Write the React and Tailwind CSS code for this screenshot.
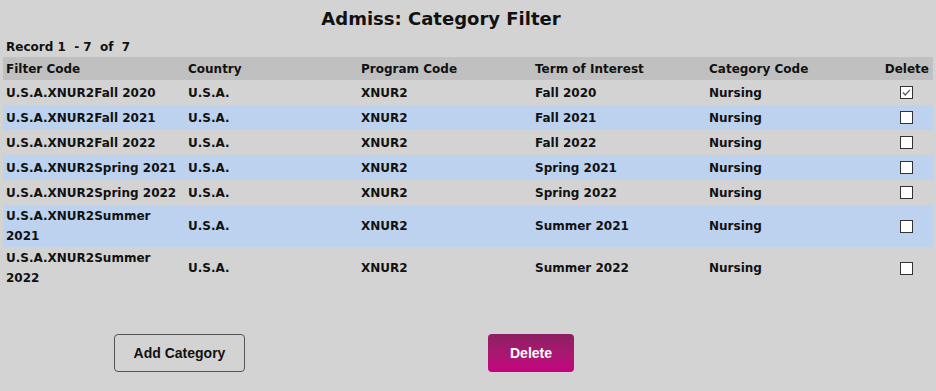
import React from "react";

const rows = [
  ["U.S.A.XNUR2Fall 2020", "Fall 2020", true],
  ["U.S.A.XNUR2Fall 2021", "Fall 2021", false],
  ["U.S.A.XNUR2Fall 2022", "Fall 2022", false],
  ["U.S.A.XNUR2Spring 2021", "Spring 2021", false],
  ["U.S.A.XNUR2Spring 2022", "Spring 2022", false],
  ["U.S.A.XNUR2Summer 2021", "Summer 2021", false],
  ["U.S.A.XNUR2Summer 2022", "Summer 2022", false],
];

function Box({ checked }) {
  return (
    <div className="w-[13px] h-[13px] border border-[#333] bg-white flex items-center justify-center">
      {checked && (
        <svg width="11" height="11" viewBox="0 0 11 11">
          <path d="M2 5.5 L4.3 8 L9 2.8" stroke="#555" strokeWidth="1.2" fill="none" />
        </svg>
      )}
    </div>
  );
}

export default function App() {
  return (
    <div className="w-[936px] h-[391px] bg-[#d3d3d3] text-[#111] font-['DejaVu_Sans',sans-serif] font-bold flex flex-col">
      <h1 className="text-center text-[18px] leading-[24px] pt-[7px] h-[36px] pr-[54px]">Admiss: Category Filter</h1>
      <div className="text-[12px] leading-[18px] pl-[6px] h-[21px] pt-[2px]">Record 1&nbsp; - 7&nbsp; of&nbsp; 7</div>
      <div className="mx-[3px] w-[930px] text-[12px]">
        <div className="grid grid-cols-[182px_173px_174px_174px_174px_53px] bg-[#c0c0c0] h-[23px] items-center font-bold">
          <div className="pl-[3px]">Filter Code</div>
          <div className="pl-[3px]">Country</div>
          <div className="pl-[3px]">Program Code</div>
          <div className="pl-[3px]">Term of Interest</div>
          <div className="pl-[3px]">Category Code</div>
          <div className="text-right pr-[4px]">Delete</div>
        </div>
        {rows.map((r, i) => (
          <div
            key={i}
            className={`grid grid-cols-[182px_173px_174px_174px_174px_53px] items-center min-h-[25px] ${i % 2 === 1 ? "bg-[#bcd2ee]" : ""}`}
          >
            <div className="pl-[3px] pr-[6px] leading-[20px] py-[1px]">{r[0]}</div>
            <div className="pl-[3px]">U.S.A.</div>
            <div className="pl-[3px]">XNUR2</div>
            <div className="pl-[3px]">{r[1]}</div>
            <div className="pl-[3px]">Nursing</div>
            <div className="flex justify-center">
              <Box checked={r[2]} />
            </div>
          </div>
        ))}
      </div>
      <div className="flex-1">
        <div className="flex pt-[45px]">
          <button className="ml-[114px] w-[131px] h-[38px] rounded-[4px] border border-[#555] text-[14px] font-['Liberation_Sans',sans-serif] font-bold text-[#111]">Add Category</button>
          <button className="ml-[243px] w-[86px] h-[38px] rounded-[4px] bg-gradient-to-b from-[#8c1f62] to-[#c6007f] text-white text-[14px] font-['Liberation_Sans',sans-serif] font-bold">Delete</button>
        </div>
      </div>
    </div>
  );
}
